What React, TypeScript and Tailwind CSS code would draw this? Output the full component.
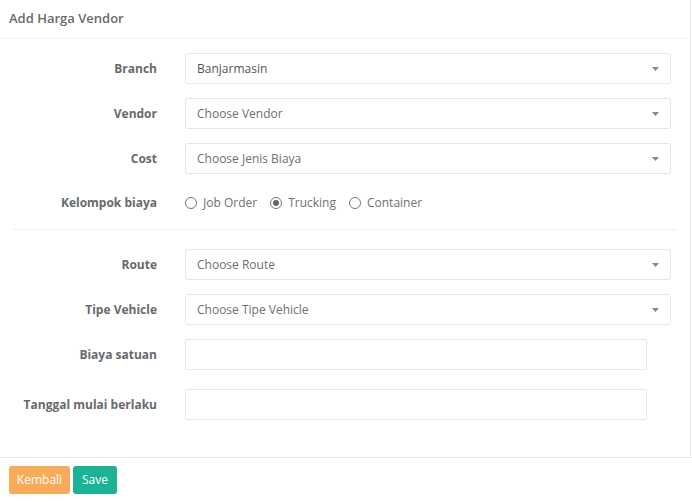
import React from 'react';

const Arrow = () => (
  <svg width="7" height="4" viewBox="0 0 7 4" className="absolute right-[11px] top-1/2 -translate-y-1/2">
    <path d="M0 0 L7 0 L3.5 4 Z" fill="#888" />
  </svg>
);

const Select = ({ value, placeholder }: { value?: string; placeholder?: string }) => (
  <div className="relative w-[486px] h-[31px] border border-[#e5e6e7] rounded-[3px] bg-white flex items-center pl-[11px]">
    <span className={value ? 'text-[#555]' : 'text-[#6f6f6f]'}>{value ?? placeholder}</span>
    <Arrow />
  </div>
);

const Row = ({ label, children, className = '' }: { label: string; children: React.ReactNode; className?: string }) => (
  <div className={`flex items-center ${className}`}>
    <label className="w-[157px] text-right font-bold text-[#676a6c]">{label}</label>
    <div className="ml-[28px]">{children}</div>
  </div>
);

const Radio = ({ label, checked }: { label: string; checked?: boolean }) => (
  <span className="flex items-center mr-[13px]">
    <span className="w-[12px] h-[12px] rounded-full border border-[#777] flex items-center justify-center mr-[6px]">
      {checked && <span className="w-[6px] h-[6px] rounded-full bg-[#666]" />}
    </span>
    <span className="text-[#6f6f6f]">{label}</span>
  </span>
);

export default function App() {
  return (
    <div className="w-[692px] h-[504px] bg-white font-['Open_Sans',sans-serif] text-[12px] overflow-hidden">
      <div className="w-[691px] h-[457px] border-r border-[#e7eaec]">
        <div className="h-[39px] border-b border-[#eef0f2] flex items-center px-[9px]">
          <h5 className="text-[13px] font-semibold text-[#676a6c]">Add Harga Vendor</h5>
        </div>

        <div className="flex flex-col">
          <Row label="Branch" className="mt-[14px]">
            <Select value="Banjarmasin" />
          </Row>
          <Row label="Vendor" className="mt-[14px]">
            <Select placeholder="Choose Vendor" />
          </Row>
          <Row label="Cost" className="mt-[14px]">
            <Select placeholder="Choose Jenis Biaya" />
          </Row>
          <Row label="Kelompok biaya" className="mt-[19px] h-[20px]">
            <div className="flex items-center">
              <Radio label="Job Order" />
              <Radio label="Trucking" checked />
              <Radio label="Container" />
            </div>
          </Row>
          <div className="mx-[13px] mt-[16px] border-t border-[#eef0f2]" />
          <Row label="Route" className="mt-[19px]">
            <Select placeholder="Choose Route" />
          </Row>
          <Row label="Tipe Vehicle" className="mt-[14px]">
            <Select placeholder="Choose Tipe Vehicle" />
          </Row>
          <Row label="Biaya satuan" className="mt-[14px]">
            <div className="w-[462px] h-[31px] border border-[#e5e6e7] rounded-[2px]" />
          </Row>
          <Row label="Tanggal mulai berlaku" className="mt-[19px]">
            <div className="w-[462px] h-[31px] border border-[#e5e6e7] rounded-[2px]" />
          </Row>
        </div>
      </div>

      <div className="border-t border-[#e7eaec] flex items-center gap-[3px] px-[9px] pt-[8px]">
        <button className="h-[28px] w-[61px] rounded-[3px] bg-[#f8ac59] text-white text-[12px]">Kembali</button>
        <button className="h-[28px] w-[44px] rounded-[3px] bg-[#1ab394] text-white text-[12px]">Save</button>
      </div>
    </div>
  );
}
